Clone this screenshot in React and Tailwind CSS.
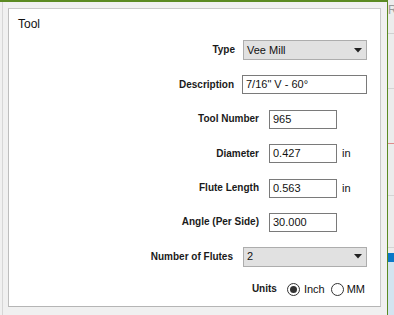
import React from "react";

const GREEN = "#5b8a22";

function Label({ children, gap }) {
  return (
    <span className={`font-bold text-[10px] leading-[12px] text-[#1a1a1a] whitespace-nowrap ${gap}`}>{children}</span>
  );
}

function Select({ value }) {
  return (
    <div className="w-[124px] h-[20px] bg-[#e1e1e1] border border-[#adadad] flex items-center justify-between pl-[3px] pr-[4px]">
      <span className="text-[11px] leading-[13px] text-[#111]">{value}</span>
      <svg width="8" height="5" viewBox="0 0 8 5">
        <path d="M0 0 L8 0 L4 4.5 Z" fill="#222" />
      </svg>
    </div>
  );
}

function TextInput({ value, width }) {
  return (
    <div className={`${width} h-[19px] bg-white border border-[#7a7a7a] flex items-center pl-[3px]`}>
      <span className="text-[11px] leading-[13px] text-[#111] whitespace-nowrap">{value}</span>
    </div>
  );
}

function Row({ h, children }) {
  return <div className={`${h} flex items-center justify-end pr-[13px]`}>{children}</div>;
}

function NumberRow({ h, label, value, unit }) {
  return (
    <Row h={h}>
      <Label gap="mr-[10px]">{label}</Label>
      <TextInput value={value} width="w-[68px]" />
      <div className="w-[30px] pl-[5px] text-[11px] leading-[13px] text-[#111]">{unit}</div>
    </Row>
  );
}

function Radio({ checked }) {
  return (
    <div className="w-[13px] h-[13px] rounded-full border border-[#333] bg-white flex items-center justify-center">
      {checked && <div className="w-[7px] h-[7px] rounded-full bg-[#333]" />}
    </div>
  );
}

export default function App() {
  return (
    <div className="w-[394px] h-[315px] bg-[#f0f0f0] flex overflow-hidden font-['Liberation_Sans',Arial,sans-serif]">
      <div className="w-[388px] h-full flex flex-col border-r" style={{ borderColor: GREEN }}>
        <div className="h-[2px] shrink-0" style={{ background: GREEN }} />
        <div className="flex-1 flex pl-[2px]">
          <div className="w-px bg-[#d6d6d6]" />
          <div className="flex-1 pl-[5px] pt-[6px] pr-[6px] pb-[8px] flex">
            <div className="flex-1 bg-white border border-[#cacaca] border-b-[#b5b5b5] border-l-[#bdbdbd] flex flex-col">
              <div className="pl-[9px] pt-[8px] text-[12px] leading-[14px] text-[#111]">Tool</div>
              <div className="mt-[2px] flex flex-col">
                <Row h="h-[34px]">
                  <Label gap="mr-[8px]">Type</Label>
                  <Select value="Vee Mill" />
                </Row>
                <Row h="h-[35px]">
                  <Label gap="mr-[8px]">Description</Label>
                  <TextInput value={"7/16\" V - 60°"} width="w-[125px]" />
                </Row>
                <NumberRow h="h-[34px]" label="Tool Number" value="965" unit="" />
                <NumberRow h="h-[35px]" label="Diameter" value="0.427" unit="in" />
                <NumberRow h="h-[34px]" label="Flute Length" value="0.563" unit="in" />
                <NumberRow h="h-[34px]" label="Angle (Per Side)" value="30.000" unit="" />
                <Row h="h-[35px]">
                  <Label gap="mr-[10px]">Number of Flutes</Label>
                  <Select value="2" />
                </Row>
                <Row h="h-[30px]">
                  <Label gap="mr-[10px]">Units</Label>
                  <Radio checked />
                  <span className="ml-[4px] text-[11px] leading-[13px] text-[#111]">Inch</span>
                  <div className="ml-[6px]">
                    <Radio />
                  </div>
                  <span className="ml-[3px] mr-[2px] text-[11px] leading-[13px] text-[#111]">MM</span>
                </Row>
              </div>
            </div>
          </div>
        </div>
      </div>
      <div className="flex-1 flex flex-col overflow-hidden bg-[#ececec]">
        <div className="h-[33px] text-[12px] leading-[14px] pt-[3px] text-[#9a9a9a]">R</div>
        <div className="h-[55px] border-t border-[#d0d0d0]" />
        <div className="h-[55px] border-t border-[#d4d4d4]" />
        <div className="h-[52px] border-t border-[#e08a8a]" />
        <div className="h-[52px] border-t border-[#d4d4d4]" />
        <div className="h-[6px] border-t border-[#d4d4d4]" />
        <div className="h-[9px] bg-[#0a78c8]" />
        <div className="flex-1 bg-[#d3e4f0]" />
      </div>
    </div>
  );
}
